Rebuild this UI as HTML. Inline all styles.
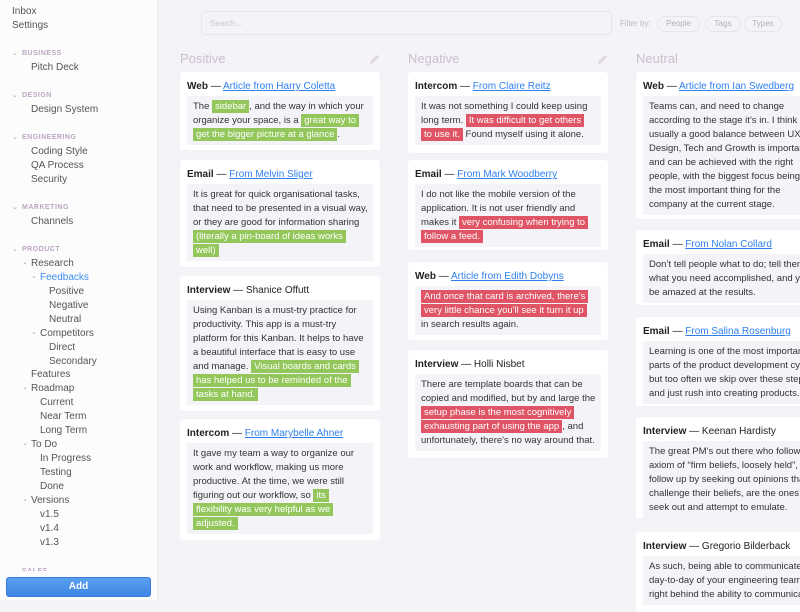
<!DOCTYPE html>
<html><head><meta charset="utf-8"><style>
*{margin:0;padding:0;box-sizing:border-box}
body{width:800px;height:600px;overflow:hidden;background:#f4f3f7;font-family:"Liberation Sans",sans-serif;position:relative;color:#333}
#sb{position:absolute;left:0;top:0;width:158px;height:600px;background:#fcfcfd;border-right:1px solid #ebe9ef}
.si{position:absolute;font-size:10px;color:#555;white-space:nowrap;line-height:12px}
.sh{position:absolute;font-size:7px;color:#bba6c0;letter-spacing:.5px;font-weight:bold;white-space:nowrap;line-height:10px}
.ch{position:absolute;font-size:7px;color:#aaa;line-height:10px}
.add{position:absolute;left:6px;top:577px;width:145px;height:20px;background:linear-gradient(#5aa0f0,#3f86e6);border:1px solid #3a7bd5;border-radius:3px;color:#fff;font-size:10px;font-weight:bold;text-align:center;line-height:18px}
.search{position:absolute;left:201px;top:11px;width:411px;height:24px;border:1px solid #e8e6ec;border-radius:4px;font-size:8px;color:#cbc4cf;padding:7px 8px}
.fl{position:absolute;top:19px;left:620px;font-size:8px;color:#bfb6c4}
.pill{position:absolute;top:16px;height:16px;border:1px solid #e6e3ea;border-radius:8px;font-size:8px;color:#b7aebb;text-align:center;line-height:14px}
.ct{position:absolute;top:51px;font-size:13px;color:#cbbfcf}
.card{position:absolute;width:200px;background:#fff;border-radius:3px;box-shadow:0 0 1px rgba(0,0,0,.05)}
.card h4{position:absolute;left:7px;top:9px;font-size:10px;font-weight:normal;color:#222;white-space:nowrap}
.card h4 b{font-weight:bold}
.card h4 a{color:#2f80ed;text-decoration:underline}
.q{position:absolute;left:7px;top:24px;width:186px;background:#f4f3f7;border-radius:2px;padding:4px 6px 3px;font-size:9.5px;line-height:14px;color:#333;white-space:nowrap}
.g{background:#93c75b;color:#fff;padding:1px 3px}
.r{background:#df5566;color:#fff;padding:1px 3px}
</style></head><body>
<div id="sb">
<div class="si" style="left:12px;top:6px">Inbox</div>
<div class="si" style="left:12px;top:20px">Settings</div>
<div class="ch" style="left:12px;top:49px">⌄</div><div class="sh" style="left:22px;top:49px">BUSINESS</div>
<div class="si" style="left:31px;top:62px">Pitch Deck</div>
<div class="ch" style="left:12px;top:91px">⌄</div><div class="sh" style="left:22px;top:91px">DESIGN</div>
<div class="si" style="left:31px;top:104px">Design System</div>
<div class="ch" style="left:12px;top:133px">⌄</div><div class="sh" style="left:22px;top:133px">ENGINEERING</div>
<div class="si" style="left:31px;top:146px">Coding Style</div>
<div class="si" style="left:31px;top:160px">QA Process</div>
<div class="si" style="left:31px;top:174px">Security</div>
<div class="ch" style="left:12px;top:203px">⌄</div><div class="sh" style="left:22px;top:203px">MARKETING</div>
<div class="si" style="left:31px;top:216px">Channels</div>
<div class="ch" style="left:12px;top:245px">⌄</div><div class="sh" style="left:22px;top:245px">PRODUCT</div>
<div class="ch" style="left:22px;top:258px">⌄</div><div class="si" style="left:31px;top:258px">Research</div>
<div class="ch" style="left:31px;top:272px">⌄</div><div class="si" style="left:40px;top:272px;color:#3d8ef0">Feedbacks</div>
<div class="si" style="left:49px;top:286px">Positive</div>
<div class="si" style="left:49px;top:300px">Negative</div>
<div class="si" style="left:49px;top:314px">Neutral</div>
<div class="ch" style="left:31px;top:328px">⌄</div><div class="si" style="left:40px;top:328px">Competitors</div>
<div class="si" style="left:49px;top:342px">Direct</div>
<div class="si" style="left:49px;top:356px">Secondary</div>
<div class="si" style="left:31px;top:369px">Features</div>
<div class="ch" style="left:22px;top:383px">⌄</div><div class="si" style="left:31px;top:383px">Roadmap</div>
<div class="si" style="left:40px;top:397px">Current</div>
<div class="si" style="left:40px;top:411px">Near Term</div>
<div class="si" style="left:40px;top:425px">Long Term</div>
<div class="ch" style="left:22px;top:439px">⌄</div><div class="si" style="left:31px;top:439px">To Do</div>
<div class="si" style="left:40px;top:453px">In Progress</div>
<div class="si" style="left:40px;top:467px">Testing</div>
<div class="si" style="left:40px;top:481px">Done</div>
<div class="ch" style="left:22px;top:495px">⌄</div><div class="si" style="left:31px;top:495px">Versions</div>
<div class="si" style="left:40px;top:509px">v1.5</div>
<div class="si" style="left:40px;top:523px">v1.4</div>
<div class="si" style="left:40px;top:537px">v1.3</div>
<div class="sh" style="left:22px;top:567px;height:4px;overflow:hidden">SALES</div>
<div class="add">Add</div>
</div>

<div class="search">Search...</div>
<div class="fl">Filter by:</div>
<div class="pill" style="left:657px;width:43px">People</div>
<div class="pill" style="left:705px;width:36px">Tags</div>
<div class="pill" style="left:744px;width:38px">Types</div>

<div class="ct" style="left:180px">Positive</div>
<div class="ct" style="left:408px">Negative</div>
<div class="ct" style="left:636px">Neutral</div>
<svg style="position:absolute;left:368px;top:53px" width="13" height="13" viewBox="0 0 13 13"><path d="M2 11 L2.5 8.5 L9 2 L11 4 L4.5 10.5 Z" fill="#ddd5df"/></svg>
<svg style="position:absolute;left:596px;top:53px" width="13" height="13" viewBox="0 0 13 13"><path d="M2 11 L2.5 8.5 L9 2 L11 4 L4.5 10.5 Z" fill="#ddd5df"/></svg>

<!-- Positive -->
<div class="card" style="left:180px;top:72px;height:78px"><h4><b>Web</b> — <a>Article from Harry Coletta</a></h4>
<div class="q">The <span class="g">sidebar</span>, and the way in which your<br>organize your space, is a <span class="g">great way to</span><br><span class="g">get the bigger picture at a glance</span>.</div></div>
<div class="card" style="left:180px;top:160px;height:107px"><h4><b>Email</b> — <a>From Melvin Sliger</a></h4>
<div class="q">It is great for quick organisational tasks,<br>that need to be presented in a visual way,<br>or they are good for information sharing<br><span class="g">(literally a pin-board of ideas works</span><br><span class="g">well)</span></div></div>
<div class="card" style="left:180px;top:276px;height:135px"><h4><b>Interview</b> — Shanice Offutt</h4>
<div class="q">Using Kanban is a must-try practice for<br>productivity. This app is a must-try<br>platform for this Kanban. It helps to have<br>a beautiful interface that is easy to use<br>and manage. <span class="g">Visual boards and cards</span><br><span class="g">has helped us to be reminded of the</span><br><span class="g">tasks at hand.</span></div></div>
<div class="card" style="left:180px;top:419px;height:121px"><h4><b>Intercom</b> — <a>From Marybelle Ahner</a></h4>
<div class="q">It gave my team a way to organize our<br>work and workflow, making us more<br>productive. At the time, we were still<br>figuring out our workflow, so <span class="g">its</span><br><span class="g">flexibility was very helpful as we</span><br><span class="g">adjusted.</span></div></div>

<!-- Negative -->
<div class="card" style="left:408px;top:72px;height:81px"><h4><b>Intercom</b> — <a>From Claire Reitz</a></h4>
<div class="q">It was not something I could keep using<br>long term. <span class="r">It was difficult to get others</span><br><span class="r">to use it.</span> Found myself using it alone.</div></div>
<div class="card" style="left:408px;top:160px;height:90px"><h4><b>Email</b> — <a>From Mark Woodberry</a></h4>
<div class="q">I do not like the mobile version of the<br>application. It is not user friendly and<br>makes it <span class="r">very confusing when trying to</span><br><span class="r">follow a feed.</span></div></div>
<div class="card" style="left:408px;top:262px;height:78px"><h4><b>Web</b> — <a>Article from Edith Dobyns</a></h4>
<div class="q"><span class="r">And once that card is archived, there's</span><br><span class="r">very little chance you'll see it turn it up</span><br>in search results again.</div></div>
<div class="card" style="left:408px;top:350px;height:108px"><h4><b>Interview</b> — Holli Nisbet</h4>
<div class="q">There are template boards that can be<br>copied and modified, but by and large the<br><span class="r">setup phase is the most cognitively</span><br><span class="r">exhausting part of using the app</span>, and<br>unfortunately, there's no way around that.</div></div>

<!-- Neutral -->
<div class="card" style="left:636px;top:72px;height:147px"><h4><b>Web</b> — <a>Article from Ian Swedberg</a></h4>
<div class="q">Teams can, and need to change<br>according to the stage it’s in. I think<br>usually a good balance between UX,<br>Design, Tech and Growth is important<br>and can be achieved with the right<br>people, with the biggest focus being on<br>the most important thing for the<br>company at the current stage.</div></div>
<div class="card" style="left:636px;top:230px;height:75px"><h4><b>Email</b> — <a>From Nolan Collard</a></h4>
<div class="q">Don’t tell people what to do; tell them<br>what you need accomplished, and you’ll<br>be amazed at the results.</div></div>
<div class="card" style="left:636px;top:317px;height:89px"><h4><b>Email</b> — <a>From Salina Rosenburg</a></h4>
<div class="q">Learning is one of the most important<br>parts of the product development cycle,<br>but too often we skip over these steps<br>and just rush into creating products.</div></div>
<div class="card" style="left:636px;top:417px;height:101px"><h4><b>Interview</b> — Keenan Hardisty</h4>
<div class="q">The great PM’s out there who follow the<br>axiom of “firm beliefs, loosely held”, and<br>follow up by seeking out opinions that<br>challenge their beliefs, are the ones to<br>seek out and attempt to emulate.</div></div>
<div class="card" style="left:636px;top:532px;height:80px"><h4><b>Interview</b> — Gregorio Bilderback</h4>
<div class="q">As such, being able to communicate the<br>day-to-day of your engineering team is<br>right behind the ability to communicate</div></div>
</body></html>
